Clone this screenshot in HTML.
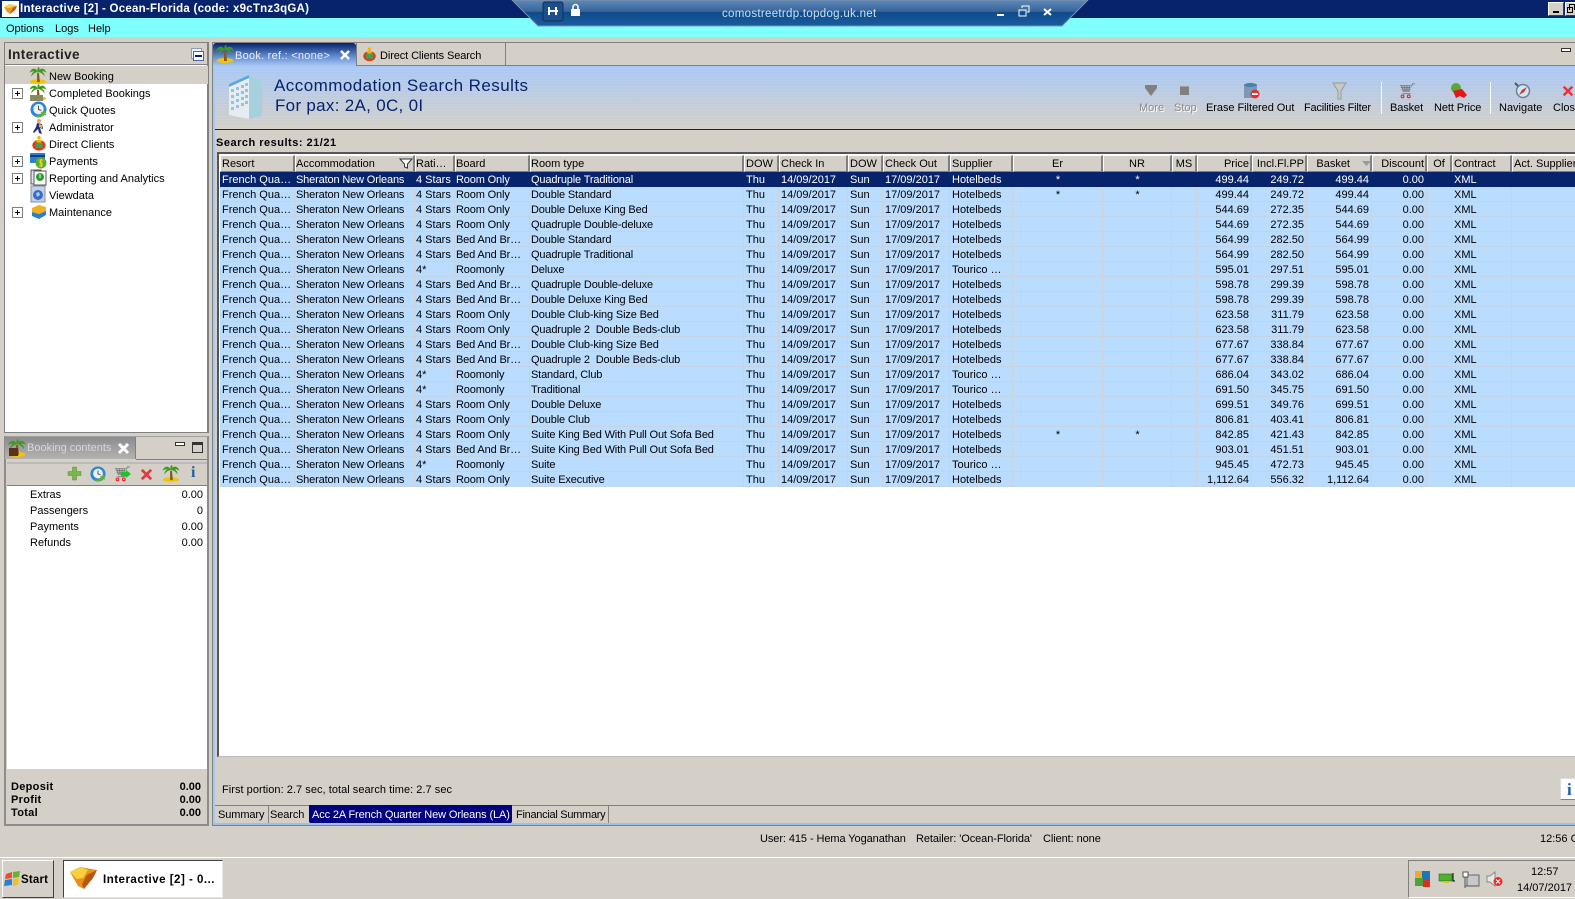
<!DOCTYPE html>
<html><head><meta charset="utf-8"><title>Interactive</title>
<style>
html,body{margin:0;padding:0}
body{width:1575px;height:899px;overflow:hidden;background:#d4d0c8;position:relative;font:11px "Liberation Sans",sans-serif;color:#000;letter-spacing:0}
.a{position:absolute;white-space:nowrap;margin-top:1px}
.p{position:absolute;box-sizing:border-box}
svg{position:absolute;overflow:visible}
#grid{position:absolute;left:220px;top:155px;width:1360px;border-collapse:separate;border-spacing:0;table-layout:fixed;font-size:11px}
#grid th{height:17px;padding:1px 1px 0;font-weight:normal;text-align:left;background:#d4d0c8;border-left:1px solid #fff;border-top:1px solid #fff;border-right:2px solid #808080;border-bottom:1px solid #808080;box-sizing:border-box;white-space:nowrap;overflow:hidden}
#grid td{height:15px;padding:2px 1px 0 2px;background:#badcff;border-right:1px solid #ccd2d8;border-bottom:1px solid #c4d4e4;box-sizing:border-box;white-space:nowrap;overflow:hidden;line-height:12px}
#grid tr.s td{background:#06236b;color:#fff;border-color:#06236b}
#grid td:nth-child(n+2):nth-child(-n+5){padding-left:1px}
#grid th:nth-child(n+2):nth-child(-n+5){padding-left:0}
#grid td:nth-child(2),#grid td:nth-child(5),#grid td:nth-child(4){letter-spacing:-.15px}
#grid td:nth-child(11),#grid td:nth-child(12){text-align:center}
#grid td:nth-child(n+14):nth-child(-n+17),#grid th:nth-child(n+14):nth-child(-n+17){text-align:right}
#grid td:nth-child(n+14):nth-child(-n+17){padding-right:2px}
#grid th:nth-child(11),#grid th:nth-child(12),#grid th:nth-child(13),#grid th:nth-child(18){text-align:center}
.tree{left:49px}
.tb{top:101px;font-size:11px}
.gr{color:#8a8a8a;text-shadow:1px 1px 0 #fff}
.plus{position:absolute;left:12px;width:9px;height:9px;border:1px solid #808080;background:#fff;box-sizing:content-box}
.plus:before{content:"";position:absolute;left:2px;top:4px;width:5px;height:1px;background:#000}
.plus:after{content:"";position:absolute;left:4px;top:2px;width:1px;height:5px;background:#000}
</style></head><body>
<svg width="0" height="0" style="position:absolute">
<defs>
<symbol id="palm" viewBox="0 0 18 18"><ellipse cx="9" cy="15.500" rx="8.500" ry="2.500" fill="#f2c500"/><path d="M8 6h2l1 10H8z" fill="#8a5a1c"/><path d="M9 5C6 0 2 1 0 6c2-1 3-2 5-1-2 1-3 2-3 5 2-3 4-4 7-5zm0 0c3-5 7-4 9 1-2-1-3-2-5-1 2 1 3 2 3 5-2-3-4-4-7-5zM9 5C8 3 8 1 10 0c1 2 1 4-1 5z" fill="#3f9a22"/></symbol>
<symbol id="clock" viewBox="0 0 18 18"><circle cx="9" cy="9" r="8.500" fill="#2a86d8"/><circle cx="9" cy="8.500" r="5.500" fill="#eef2f6"/><path d="M9 5v4l3 1" stroke="#444" fill="none"/><path d="M4 15c3 3 8 3 11-1l2 2-1-6-5 2 2 1c-2 2-5 3-9 2z" fill="#5fb52a"/></symbol>
<symbol id="cross" viewBox="0 0 16 16"><path d="M2 4l2-2 4 4 4-4 2 2-4 4 4 4-2 2-4-4-4 4-2-2 4-4z" fill="#e8343c"/></symbol>
<symbol id="cart" viewBox="0 0 18 18"><path d="M1 3h12M2 5h11M3 7h10M4 9h8M14 4l1-3h3" stroke="#777" fill="none"/><path d="M3 3l2 7M6 3l1 7M9 3v7M12 3l-1 7M4 12h9" stroke="#777" fill="none"/><circle cx="4" cy="15" r="1.600" fill="none" stroke="#e01010"/><circle cx="11" cy="15" r="1.600" fill="none" stroke="#e01010"/></symbol>
<symbol id="client" viewBox="0 0 18 18"><circle cx="9" cy="2.500" r="2" fill="#f2b400"/><ellipse cx="9" cy="11" rx="7.500" ry="6" fill="#e83a12"/><rect x="5" y="8" width="8" height="6" fill="#3aa35a"/><path d="M5 5h8l-2 3H7z" fill="#f2b400"/></symbol>
</defs></svg>

<!-- title bar -->
<div class="p" style="left:0;top:0;width:1575px;height:18px;background:#06236b"></div>
<svg style="left:2px;top:1px" width="17" height="16"><rect width="17" height="16" fill="#fff"/><path d="M2 6l5-3 8 2-2 4-5 4-3-2z" fill="#e89a20"/><path d="M2 6l5-3 6 2-6 2z" fill="#f7d35a"/><path d="M8 13l5-4 2-4-4 2z" fill="#b8560f"/></svg>
<div class="a" style="left:20px;top:2px;color:#fff;font-weight:bold;font-size:11.500px;letter-spacing:.25px">Interactive [2] - Ocean-Florida (code: x9cTnz3qGA)</div>
<div class="p" style="left:0;top:18px;width:1575px;height:19px;background:#80ffff"></div>
<div class="a" style="left:6px;top:22px">Options</div><div class="a" style="left:55px;top:22px">Logs</div><div class="a" style="left:88px;top:22px">Help</div>

<!-- RDP bar -->
<svg style="left:0;top:0" width="1575" height="30"><defs><linearGradient id="rd" x1="0" y1="0" x2="0" y2="1"><stop offset="0" stop-color="#6288b8"/><stop offset=".45" stop-color="#356399"/><stop offset=".46" stop-color="#0f4a8a"/><stop offset="1" stop-color="#1a5c9e"/></linearGradient></defs>
<path d="M512 0H1088L1062 26H538z" fill="url(#rd)" stroke="#7d93ad"/>
<rect x="543" y="2" width="20" height="19" rx="2" fill="#1d4f8a" stroke="#0d2f5c"/>
<path d="M548 11h10M549 7v8M556 7v8" stroke="#fff" stroke-width="2" fill="none"/>
<rect x="571" y="9" width="9" height="7" fill="#fff"/><path d="M573 9V7a2.500 2.500 0 0 1 5 0v2" stroke="#fff" stroke-width="1.500" fill="none"/>
<rect x="997" y="14" width="7" height="2" fill="#fff"/>
<rect x="1019" y="10" width="7" height="6" fill="none" stroke="#fff"/><path d="M1022 8V6h7v6h-2" fill="none" stroke="#fff"/>
<path d="M1044 9l7 6M1051 9l-7 6" stroke="#fff" stroke-width="2"/></svg>
<div class="a" style="left:722px;top:7px;color:#c8e0f4;font-size:11.500px;letter-spacing:.3px">comostreetrdp.topdog.uk.net</div>

<!-- window buttons -->
<div class="p" style="left:1548px;top:2px;width:16px;height:14px;background:#d4d0c8;border:1px solid;border-color:#fff #404040 #404040 #fff"><div class="p" style="left:4px;top:8px;width:6px;height:2px;background:#000"></div></div>
<div class="p" style="left:1565px;top:2px;width:16px;height:14px;background:#d4d0c8;border:1px solid;border-color:#fff #404040 #404040 #fff"><div class="p" style="left:1px;top:4px;width:6px;height:6px;border:1px solid #000"></div><div class="p" style="left:3px;top:1px;width:6px;height:6px;border:1px solid #000;border-bottom:0"></div></div>

<!-- left top panel -->
<div class="p" style="left:4px;top:42px;width:205px;height:391px;border:1px solid #808080;border-width:1px 2px 1px 1px;background:#fff"></div>
<div class="p" style="left:5px;top:43px;width:202px;height:22px;background:#d4d0c8;border-bottom:1px solid #808080"></div>
<div class="a" style="left:8px;top:46px;font-size:13.500px;font-weight:bold;letter-spacing:.4px;color:#222">Interactive</div>
<div class="p" style="left:191px;top:48px;width:11px;height:11px;border:1px solid #8aa0c0;background:#eef3fa"></div><div class="p" style="left:193px;top:51px;width:11px;height:10px;border:1px solid #4a6a9a;background:#fff"></div><div class="p" style="left:195px;top:55px;width:7px;height:2px;background:#06236b"></div>
<div class="p" style="left:5px;top:66px;width:203px;height:18px;background:#d4d0c8"></div>
<svg style="left:29px;top:67px" width="18" height="17"><use href="#palm"/></svg>
<svg style="left:29px;top:84px" width="18" height="17"><use href="#palm"/><rect x="1" y="11" width="13" height="6" fill="#8a8a60"/></svg>
<svg style="left:30px;top:101px" width="17" height="17"><use href="#clock"/></svg>
<svg style="left:31px;top:118px" width="16" height="17"><circle cx="8" cy="3" r="2" fill="#e8a070"/><path d="M6 5l5 1 1 5-3-1 2 6-3-1-1-4-4 4-1-1 3-5z" fill="#20308a"/><path d="M8 6l3 1 0 3-3-1z" fill="#f2c500"/></svg>
<svg style="left:31px;top:135px" width="16" height="17"><use href="#client"/></svg>
<svg style="left:30px;top:152px" width="17" height="17"><rect x="0" y="1" width="15" height="10" fill="#2f7fd0"/><rect x="0" y="3" width="15" height="2" fill="#163d80"/><circle cx="11" cy="11" r="5.500" fill="#58b030"/><path d="M13 8h-3v3h2v3H9M11 7v8" stroke="#f2d020" fill="none"/></svg>
<svg style="left:31px;top:169px" width="16" height="17"><rect x="0" y="1" width="10" height="14" fill="#dfe6f0" stroke="#555"/><rect x="3" y="2" width="12" height="14" fill="#fff" stroke="#555"/><circle cx="9" cy="8" r="4" fill="#2aa02a"/><path d="M9 5v4" stroke="#fff"/></svg>
<svg style="left:31px;top:186px" width="15" height="17"><rect x="0" y="0" width="14" height="16" fill="#c8d0e0" stroke="#8090a8"/><circle cx="7" cy="9" r="5" fill="#3a6ad0"/><path d="M5 7l3-1 1 3-3 2z" fill="#a0d0f0"/></svg>
<svg style="left:31px;top:203px" width="16" height="17"><path d="M1 5l7-3 7 2v4L8 11 1 9z" fill="#f0b020"/><path d="M1 9l7 2 7-3v4l-7 4-7-3z" fill="#2a80c8"/></svg>
<div class="a tree" style="top:70px">New Booking</div>
<div class="a tree" style="top:87px">Completed Bookings</div>
<div class="a tree" style="top:104px">Quick Quotes</div>
<div class="a tree" style="top:121px">Administrator</div>
<div class="a tree" style="top:138px">Direct Clients</div>
<div class="a tree" style="top:155px">Payments</div>
<div class="a tree" style="top:172px">Reporting and Analytics</div>
<div class="a tree" style="top:189px">Viewdata</div>
<div class="a tree" style="top:206px">Maintenance</div>
<div class="plus" style="top:88px"></div><div class="plus" style="top:122px"></div><div class="plus" style="top:156px"></div><div class="plus" style="top:173px"></div><div class="plus" style="top:207px"></div>

<!-- left bottom panel -->
<div class="p" style="left:4px;top:436px;width:205px;height:390px;border:2px solid #8c8c8c;border-top:1px solid #a0a0a0;background:#d4d0c8"></div>
<div class="p" style="left:5px;top:437px;width:131px;height:22px;background:linear-gradient(#8c8c90,#b4b2b0);border-right:1px solid #808080"></div>
<div class="p" style="left:136px;top:459px;width:71px;height:1px;background:#808080"></div>
<svg style="left:8px;top:439px" width="18" height="18"><use href="#palm"/><rect x="1" y="9" width="9" height="8" fill="#5a3018"/></svg>
<div class="a" style="left:27px;top:441px;color:#d8d8d8">Booking contents</div>
<svg style="left:118px;top:443px" width="11" height="11"><path d="M1 1l9 9M10 1l-9 9" stroke="#fff" stroke-width="3"/></svg>
<div class="p" style="left:175px;top:442px;width:10px;height:4px;border:1px solid #333;background:#fff"></div>
<div class="p" style="left:192px;top:442px;width:11px;height:11px;border:1px solid #333;border-top-width:3px"></div>
<div class="p" style="left:7px;top:462px;width:200px;height:24px;background:#d4d0c8;border-top:2px solid #bbb;border-bottom:1px solid #808080"></div>
<svg style="left:68px;top:467px" width="13" height="13"><path d="M4.500 0h4v4.500H13v4H8.500V13h-4V8.500H0v-4h4.500z" fill="#7ab648" stroke="#5a8a3a" stroke-width=".5"/></svg>
<svg style="left:90px;top:466px" width="16" height="16"><use href="#clock"/></svg>
<svg style="left:114px;top:466px" width="16" height="16"><use href="#cart"/></svg><svg style="left:121px;top:470px" width="10" height="8"><path d="M0 2h5V0l5 4-5 4V6H0z" fill="#14c820"/></svg>
<svg style="left:139px;top:467px" width="15" height="15"><use href="#cross"/></svg>
<svg style="left:162px;top:465px" width="18" height="17"><use href="#palm"/></svg>
<div class="a" style="left:191px;top:464px;margin:0;font:bold 16px 'Liberation Serif',serif;color:#1b5fa8">i</div>
<div class="p" style="left:7px;top:486px;width:200px;height:283px;background:#fff"></div>
<div class="a" style="left:30px;top:488px">Extras</div><div class="a" style="right:1372px;top:488px">0.00</div>
<div class="a" style="left:30px;top:504px">Passengers</div><div class="a" style="right:1372px;top:504px">0</div>
<div class="a" style="left:30px;top:520px">Payments</div><div class="a" style="right:1372px;top:520px">0.00</div>
<div class="a" style="left:30px;top:536px">Refunds</div><div class="a" style="right:1372px;top:536px">0.00</div>
<div class="a" style="left:11px;top:780px;font-weight:bold;letter-spacing:.3px">Deposit</div><div class="a" style="right:1374px;top:780px;font-weight:bold">0.00</div>
<div class="a" style="left:11px;top:793px;font-weight:bold;letter-spacing:.3px">Profit</div><div class="a" style="right:1374px;top:793px;font-weight:bold">0.00</div>
<div class="a" style="left:11px;top:806px;font-weight:bold;letter-spacing:.3px">Total</div><div class="a" style="right:1374px;top:806px;font-weight:bold">0.00</div>

<!-- main panel -->
<div class="p" style="left:212px;top:42px;width:1370px;height:784px;border:1px solid #808080;border-bottom:3px solid #808080;background:#d4d0c8"></div>
<div class="p" style="left:213px;top:823px;width:1362px;height:2px;background:#9cc0ea"></div>
<div class="p" style="left:213px;top:66px;width:2px;height:758px;background:#a8c8f0"></div>
<div class="p" style="left:213px;top:65px;width:1362px;height:1px;background:#808080"></div>
<div class="p" style="left:215px;top:66px;width:1360px;height:63px;background:repeating-linear-gradient(#0000 0 2px,#ffffff12 2px 3px),linear-gradient(#a9c8f6,#d4d0c8)"></div>
<div class="p" style="left:215px;top:129px;width:1360px;height:1px;background:#06236b"></div>
<!-- tabs -->
<div class="p" style="left:213px;top:43px;width:143px;height:23px;background:linear-gradient(#06236b,#5d86cc 55%,#a9c8f6);border-radius:3px 3px 0 0"></div>
<svg style="left:216px;top:45px" width="18" height="18"><use href="#palm"/></svg>
<div class="a" style="left:235px;top:49px;color:#e8eef8;letter-spacing:.25px">Book. ref.: &lt;none&gt;</div>
<svg style="left:340px;top:50px" width="10" height="10"><path d="M1 1l8 8M9 1l-8 8" stroke="#fff" stroke-width="2.500"/></svg>
<div class="p" style="left:356px;top:43px;width:150px;height:23px;border-right:1px solid #808080;border-left:1px solid #808080"></div>
<svg style="left:362px;top:46px" width="15" height="17"><use href="#client"/></svg>
<div class="a" style="left:380px;top:49px;letter-spacing:-.1px">Direct Clients Search</div>
<div class="p" style="left:1561px;top:48px;width:10px;height:4px;border:1px solid #333;background:#fff"></div>

<!-- toolbar header -->
<svg style="left:227px;top:74px" width="36" height="46"><path d="M2 10L22 1l13 4v37l-13 3-20-4z" fill="#e6ecf0"/><path d="M22 1l13 4v37l-13 3z" fill="#a8d0dc"/><path d="M2 10L22 1v3L2 13z" fill="#5aa8e0"/><g fill="#8cc4ea"><rect x="4" y="15" width="3" height="3"/><rect x="9" y="13" width="3" height="3"/><rect x="14" y="11" width="3" height="3"/><rect x="18" y="9" width="3" height="3"/><rect x="4" y="21" width="3" height="3"/><rect x="9" y="19" width="3" height="3"/><rect x="14" y="17" width="3" height="3"/><rect x="18" y="15" width="3" height="3"/><rect x="4" y="27" width="3" height="3"/><rect x="9" y="25" width="3" height="3"/><rect x="14" y="23" width="3" height="3"/><rect x="18" y="21" width="3" height="3"/><rect x="4" y="33" width="3" height="3"/><rect x="9" y="31" width="3" height="3"/><rect x="14" y="29" width="3" height="3"/><rect x="18" y="27" width="3" height="3"/></g></svg>
<div class="a" style="left:274px;top:76px;margin:0;font-size:17px;color:#06236b;letter-spacing:.45px">Accommodation Search Results</div>
<div class="a" style="left:275px;top:96px;margin:0;font-size:17px;color:#06236b;letter-spacing:.3px">For pax: 2A, 0C, 0I</div>
<svg style="left:1145px;top:85px" width="12" height="11"><path d="M0 0h12v3L6 11 0 3z" fill="#808080"/></svg>
<div class="a tb gr" style="left:1139px">More</div>
<div class="p" style="left:1180px;top:86px;width:9px;height:9px;background:#808080;border-top:1px solid #a0a0a0"></div>
<div class="a tb gr" style="left:1174px">Stop</div>
<svg style="left:1244px;top:83px" width="16" height="16"><path d="M0 2h13v13H0z" fill="#7a9ab8"/><ellipse cx="6.500" cy="2" rx="6.500" ry="2" fill="#4a80a8"/><circle cx="11" cy="11" r="4.500" fill="#e03030"/><rect x="8" y="10" width="6" height="2" fill="#fff"/></svg>
<div class="a tb" style="left:1206px;letter-spacing:-.05px">Erase Filtered Out</div>
<svg style="left:1333px;top:83px" width="13" height="16"><path d="M0 0h13L8 8v8H5V8z" fill="#c8c8c8" stroke="#999"/></svg>
<div class="a tb" style="left:1304px;letter-spacing:-.2px">Facilities Filter</div>
<div class="p" style="left:1381px;top:82px;width:1px;height:32px;background:#808080;border-right:1px solid #fff"></div>
<svg style="left:1399px;top:83px" width="16" height="16"><use href="#cart"/></svg>
<div class="a tb" style="left:1390px;letter-spacing:-.1px">Basket</div>
<svg style="left:1450px;top:83px" width="18" height="16"><circle cx="6" cy="5" r="5" fill="#58a838"/><path d="M3 8l9-2 5 6-3 3-4-2-4 2z" fill="#e01818"/></svg>
<div class="a tb" style="left:1434px;letter-spacing:-.1px">Nett Price</div>
<div class="p" style="left:1490px;top:82px;width:1px;height:32px;background:#808080;border-right:1px solid #fff"></div>
<svg style="left:1514px;top:82px" width="17" height="17"><circle cx="9" cy="9" r="6.500" fill="#cfe6f4" stroke="#708090" stroke-width="1.500"/><path d="M5 13l3-5 5-3-3 5z" fill="#d03020"/><path d="M1 1l3 3" stroke="#555" stroke-width="2"/></svg>
<div class="a tb" style="left:1499px">Navigate</div>
<svg style="left:1561px;top:84px" width="14" height="14"><use href="#cross"/></svg>
<div class="a tb" style="left:1553px">Close</div>

<div class="a" style="left:216px;top:136px;font-weight:bold;letter-spacing:.5px">Search results: 21/21</div>

<!-- grid frame -->
<div class="p" style="left:217px;top:152px;width:1358px;height:605px;background:#fff;border-top:2px solid #555;border-left:2px solid #555;border-bottom:1px solid #bbb"></div>
<table id="grid" cellspacing="0"><colgroup><col style="width:75px"><col style="width:120px"><col style="width:40px"><col style="width:75px"><col style="width:214px"><col style="width:35px"><col style="width:69px"><col style="width:35px"><col style="width:67px"><col style="width:63px"><col style="width:90px"><col style="width:69px"><col style="width:25px"><col style="width:55px"><col style="width:55px"><col style="width:65px"><col style="width:55px"><col style="width:25px"><col style="width:60px"><col style="width:68px"></colgroup>
<tr><th>Resort<th>Accommodation<th>Rati…<th>Board<th>Room type<th>DOW<th>Check In<th>DOW<th>Check Out<th>Supplier<th>Er<th>NR<th>MS<th>Price<th>Incl.Fl.PP<th style="padding-right:20px">Basket<th>Discount<th>Of<th>Contract<th>Act. Supplier
<tr class="s"><td>French Qua…<td>Sheraton New Orleans<td>4 Stars<td>Room Only<td>Quadruple Traditional<td>Thu<td>14/09/2017<td>Sun<td>17/09/2017<td>Hotelbeds<td>*<td>*<td><td>499.44<td>249.72<td>499.44<td>0.00<td><td>XML<td>
<tr><td>French Qua…<td>Sheraton New Orleans<td>4 Stars<td>Room Only<td>Double Standard<td>Thu<td>14/09/2017<td>Sun<td>17/09/2017<td>Hotelbeds<td>*<td>*<td><td>499.44<td>249.72<td>499.44<td>0.00<td><td>XML<td>
<tr><td>French Qua…<td>Sheraton New Orleans<td>4 Stars<td>Room Only<td>Double Deluxe King Bed<td>Thu<td>14/09/2017<td>Sun<td>17/09/2017<td>Hotelbeds<td><td><td><td>544.69<td>272.35<td>544.69<td>0.00<td><td>XML<td>
<tr><td>French Qua…<td>Sheraton New Orleans<td>4 Stars<td>Room Only<td>Quadruple Double-deluxe<td>Thu<td>14/09/2017<td>Sun<td>17/09/2017<td>Hotelbeds<td><td><td><td>544.69<td>272.35<td>544.69<td>0.00<td><td>XML<td>
<tr><td>French Qua…<td>Sheraton New Orleans<td>4 Stars<td>Bed And Br…<td>Double Standard<td>Thu<td>14/09/2017<td>Sun<td>17/09/2017<td>Hotelbeds<td><td><td><td>564.99<td>282.50<td>564.99<td>0.00<td><td>XML<td>
<tr><td>French Qua…<td>Sheraton New Orleans<td>4 Stars<td>Bed And Br…<td>Quadruple Traditional<td>Thu<td>14/09/2017<td>Sun<td>17/09/2017<td>Hotelbeds<td><td><td><td>564.99<td>282.50<td>564.99<td>0.00<td><td>XML<td>
<tr><td>French Qua…<td>Sheraton New Orleans<td>4*<td>Roomonly<td>Deluxe<td>Thu<td>14/09/2017<td>Sun<td>17/09/2017<td>Tourico …<td><td><td><td>595.01<td>297.51<td>595.01<td>0.00<td><td>XML<td>
<tr><td>French Qua…<td>Sheraton New Orleans<td>4 Stars<td>Bed And Br…<td>Quadruple Double-deluxe<td>Thu<td>14/09/2017<td>Sun<td>17/09/2017<td>Hotelbeds<td><td><td><td>598.78<td>299.39<td>598.78<td>0.00<td><td>XML<td>
<tr><td>French Qua…<td>Sheraton New Orleans<td>4 Stars<td>Bed And Br…<td>Double Deluxe King Bed<td>Thu<td>14/09/2017<td>Sun<td>17/09/2017<td>Hotelbeds<td><td><td><td>598.78<td>299.39<td>598.78<td>0.00<td><td>XML<td>
<tr><td>French Qua…<td>Sheraton New Orleans<td>4 Stars<td>Room Only<td>Double Club-king Size Bed<td>Thu<td>14/09/2017<td>Sun<td>17/09/2017<td>Hotelbeds<td><td><td><td>623.58<td>311.79<td>623.58<td>0.00<td><td>XML<td>
<tr><td>French Qua…<td>Sheraton New Orleans<td>4 Stars<td>Room Only<td>Quadruple 2&nbsp; Double Beds-club<td>Thu<td>14/09/2017<td>Sun<td>17/09/2017<td>Hotelbeds<td><td><td><td>623.58<td>311.79<td>623.58<td>0.00<td><td>XML<td>
<tr><td>French Qua…<td>Sheraton New Orleans<td>4 Stars<td>Bed And Br…<td>Double Club-king Size Bed<td>Thu<td>14/09/2017<td>Sun<td>17/09/2017<td>Hotelbeds<td><td><td><td>677.67<td>338.84<td>677.67<td>0.00<td><td>XML<td>
<tr><td>French Qua…<td>Sheraton New Orleans<td>4 Stars<td>Bed And Br…<td>Quadruple 2&nbsp; Double Beds-club<td>Thu<td>14/09/2017<td>Sun<td>17/09/2017<td>Hotelbeds<td><td><td><td>677.67<td>338.84<td>677.67<td>0.00<td><td>XML<td>
<tr><td>French Qua…<td>Sheraton New Orleans<td>4*<td>Roomonly<td>Standard, Club<td>Thu<td>14/09/2017<td>Sun<td>17/09/2017<td>Tourico …<td><td><td><td>686.04<td>343.02<td>686.04<td>0.00<td><td>XML<td>
<tr><td>French Qua…<td>Sheraton New Orleans<td>4*<td>Roomonly<td>Traditional<td>Thu<td>14/09/2017<td>Sun<td>17/09/2017<td>Tourico …<td><td><td><td>691.50<td>345.75<td>691.50<td>0.00<td><td>XML<td>
<tr><td>French Qua…<td>Sheraton New Orleans<td>4 Stars<td>Room Only<td>Double Deluxe<td>Thu<td>14/09/2017<td>Sun<td>17/09/2017<td>Hotelbeds<td><td><td><td>699.51<td>349.76<td>699.51<td>0.00<td><td>XML<td>
<tr><td>French Qua…<td>Sheraton New Orleans<td>4 Stars<td>Room Only<td>Double Club<td>Thu<td>14/09/2017<td>Sun<td>17/09/2017<td>Hotelbeds<td><td><td><td>806.81<td>403.41<td>806.81<td>0.00<td><td>XML<td>
<tr><td>French Qua…<td>Sheraton New Orleans<td>4 Stars<td>Room Only<td>Suite King Bed With Pull Out Sofa Bed<td>Thu<td>14/09/2017<td>Sun<td>17/09/2017<td>Hotelbeds<td>*<td>*<td><td>842.85<td>421.43<td>842.85<td>0.00<td><td>XML<td>
<tr><td>French Qua…<td>Sheraton New Orleans<td>4 Stars<td>Bed And Br…<td>Suite King Bed With Pull Out Sofa Bed<td>Thu<td>14/09/2017<td>Sun<td>17/09/2017<td>Hotelbeds<td><td><td><td>903.01<td>451.51<td>903.01<td>0.00<td><td>XML<td>
<tr><td>French Qua…<td>Sheraton New Orleans<td>4*<td>Roomonly<td>Suite<td>Thu<td>14/09/2017<td>Sun<td>17/09/2017<td>Tourico …<td><td><td><td>945.45<td>472.73<td>945.45<td>0.00<td><td>XML<td>
<tr><td>French Qua…<td>Sheraton New Orleans<td>4 Stars<td>Room Only<td>Suite Executive<td>Thu<td>14/09/2017<td>Sun<td>17/09/2017<td>Hotelbeds<td><td><td><td>1,112.64<td>556.32<td>1,112.64<td>0.00<td><td>XML<td>
</table>
<svg style="left:399px;top:158px" width="14" height="11"><path d="M1 1h12L8.500 6v4l-3-1V6z" fill="#fff" stroke="#333"/></svg>
<svg style="left:1362px;top:161px" width="9" height="5"><path d="M0 0h9L4.500 5z" fill="#999"/></svg>

<!-- footer of main -->
<div class="a" style="left:222px;top:783px;letter-spacing:.04px">First portion: 2.7 sec, total search time: 2.7 sec</div>
<div class="p" style="left:1560px;top:778px;width:20px;height:22px;background:#fff;border:1px solid;border-color:#ddd #808080 #808080 #ddd"></div>
<div class="a" style="left:1567px;top:780px;margin:0;font:bold 17px 'Liberation Serif',serif;color:#1b5fa8">i</div>
<div class="p" style="left:215px;top:805px;width:1360px;height:1px;background:#808080"></div>
<div class="a" style="left:218px;top:808px;letter-spacing:-.1px">Summary</div>
<div class="p" style="left:268px;top:806px;width:1px;height:17px;background:#808080"></div>
<div class="a" style="left:270px;top:808px;letter-spacing:-.1px">Search</div>
<div class="p" style="left:309px;top:805px;width:203px;height:18px;background:#000080;border-radius:0 0 2px 2px"></div>
<div class="a" style="left:312px;top:808px;color:#fff;letter-spacing:-.12px">Acc 2A French Quarter New Orleans (LA)</div>
<div class="a" style="left:516px;top:808px;letter-spacing:-.28px">Financial Summary</div>
<div class="p" style="left:608px;top:806px;width:1px;height:17px;background:#808080"></div>

<!-- status -->
<div class="a" style="left:760px;top:832px;letter-spacing:-.08px">User: 415 - Hema Yoganathan</div>
<div class="a" style="left:916px;top:832px;letter-spacing:-.08px">Retailer: 'Ocean-Florida'</div>
<div class="a" style="left:1043px;top:832px;letter-spacing:-.08px">Client: none</div>
<div class="a" style="left:1540px;top:832px">12:56 G</div>

<!-- taskbar -->
<div class="p" style="left:0;top:857px;width:1575px;height:1px;background:#fff"></div>
<div class="p" style="left:2px;top:860px;width:52px;height:38px;background:#d4d0c8;border:1px solid;border-color:#fff #404040 #404040 #fff"></div>
<svg style="left:4px;top:871px" width="17" height="16"><path d="M2 3l6-2v6l-7 1z" fill="#e8502a"/><path d="M9 1l7-1-1 6-6 1z" fill="#6cb030"/><path d="M1 9l7-1v6l-8 1z" fill="#2a80d8"/><path d="M9 8l6-1-1 7-5 1z" fill="#f2c020"/></svg>
<div class="a" style="left:21px;top:873px;font-weight:bold;font-size:11.500px;letter-spacing:.2px">Start</div>
<div class="p" style="left:63px;top:860px;width:160px;height:38px;background:#fff;border:1px solid;border-color:#404040 #e8e8e8 #e8e8e8 #404040"></div>
<svg style="left:69px;top:866px" width="29" height="24"><path d="M1 6l10-5 17 3-4 8-9 11-6-3z" fill="#e8901a"/><path d="M1 6l10-5 8 3-5 8-6 1z" fill="#f7d040"/><path d="M15 23l9-11 4-8-10 5-5 9z" fill="#b8560f"/></svg>
<div class="a" style="left:103px;top:873px;font-weight:bold;font-size:11.500px;letter-spacing:.5px">Interactive [2] - 0...</div>
<div class="p" style="left:1408px;top:860px;width:170px;height:38px;border-left:1px solid #808080;border-top:1px solid #808080;border-bottom:1px solid #fff"></div>
<svg style="left:1415px;top:871px" width="16" height="16"><rect width="7" height="7" fill="#f0a830"/><rect x="7" width="8" height="8" fill="#1a78b8"/><rect y="7" width="8" height="8" fill="#50a040"/><rect x="8" y="8" width="7" height="8" fill="#d83020"/></svg>
<svg style="left:1439px;top:873px" width="16" height="11"><rect y="1" width="13" height="7" fill="#50b030" stroke="#1a5010" stroke-width=".5"/><rect x="4" y="8" width="6" height="2" fill="#e0c020"/><path d="M14 0v8h2" stroke="#000" fill="none"/></svg>
<svg style="left:1463px;top:872px" width="17" height="16"><rect x="4" y="3" width="12" height="11" fill="#c8c8c8" stroke="#666"/><rect x="0" y="0" width="5" height="5" fill="#fff" stroke="#555"/><path d="M2 5v11M2 14h13" stroke="#555"/></svg>
<svg style="left:1487px;top:872px" width="16" height="15"><path d="M0 4h3l5-4v14l-5-4H0z" fill="#e8e8e8" stroke="#888"/><circle cx="11" cy="9.500" r="4.500" fill="#e03030"/><path d="M9 7.500l4 4M13 7.500l-4 4" stroke="#fff"/></svg>
<div class="a" style="left:1531px;top:865px">12:57</div>
<div class="a" style="left:1517px;top:881px">14/07/2017</div>
</body></html>
